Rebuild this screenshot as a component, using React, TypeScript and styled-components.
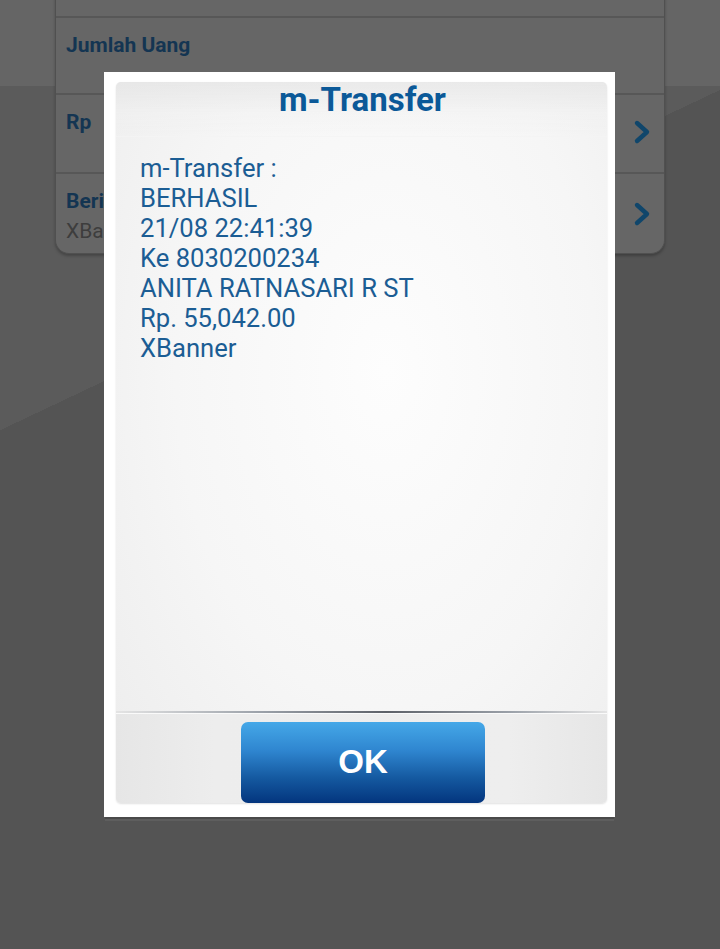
import React from "react";
import styled, { createGlobalStyle } from "styled-components";

const Global = createGlobalStyle`
  html, body { margin: 0; padding: 0; background: #545454; }
  body { font-family: Roboto, "Noto Sans", Arial, sans-serif; }
  * { box-sizing: border-box; }
`;

const Screen = styled.div`
  position: relative;
  width: 720px;
  height: 949px;
  overflow: hidden;
  background:
    linear-gradient(to bottom, #656565 0 86px, transparent 86px),
    linear-gradient(154.7deg, #5b5b5b 389px, #545454 389px);
  padding: 0 55px;
`;

const Card = styled.div`
  margin-top: -60px;
  background: #666666;
  border: 1px solid #505050;
  border-top: none;
  border-radius: 0 0 14px 14px;
  box-shadow: 0 2px 3px rgba(0, 0, 0, 0.25);
  display: flex;
  flex-direction: column;
`;

const Row = styled.div<{ $h: number; $last?: boolean }>`
  height: ${(p) => p.$h}px;
  border-bottom: ${(p) => (p.$last ? "none" : "2px solid #575757")};
  padding: 14px 12px 0 10px;
  display: flex;
  align-items: flex-start;
  justify-content: space-between;
`;

const RowText = styled.div`
  display: flex;
  flex-direction: column;
`;

const Label = styled.div`
  font-family: Roboto, sans-serif;
  font-weight: 700;
  font-size: 21px;
  line-height: 26px;
  color: #143552;
`;

const Value = styled.div<{ $top?: boolean }>`
  font-family: Roboto, sans-serif;
  font-size: 21px;
  line-height: 26px;
  color: #3d3d3d;
  margin-top: ${(p) => (p.$top ? "-31px" : "4px")};
  white-space: nowrap;
`;

const Chevron = styled.svg<{ $dy: number }>`
  width: 20px;
  height: 26px;
  margin-top: ${(p) => p.$dy}px;
  flex: none;
`;

const Overlay = styled.div`
  position: absolute;
  left: 104px;
  top: 72px;
  width: 511px;
  height: 745px;
  background: #ffffff;
  padding: 10px 8px 14px 12px;
  box-shadow: 0 3px 0 -1px #4a4a4a, 0 5px 0 -1px #5e5e5e;
`;

const Panel = styled.div`
  height: 100%;
  border-radius: 5px;
  display: flex;
  flex-direction: column;
  background: radial-gradient(ellipse at 55% 40%, #fdfdfd 0%, #f6f6f6 55%, #ececec 100%);
  box-shadow: 0 1px 2px rgba(0, 0, 0, 0.12);
`;

const Title = styled.div`
  height: 55px;
  flex: none;
  text-align: center;
  font-family: Roboto, sans-serif;
  font-weight: 700;
  font-size: 33px;
  line-height: 36px;
  color: #0b5998;
  padding-left: 2px;
  border-radius: 5px 5px 0 0;
  background: linear-gradient(to bottom, rgba(225, 225, 225, 0.6), rgba(240, 240, 240, 0.3) 60%, rgba(250, 250, 250, 0));
  border-bottom: 1px solid rgba(255, 255, 255, 0.5);
`;

const Body = styled.div`
  flex: 1;
  padding: 16px 0 0 24px;
  font-family: Roboto, sans-serif;
  font-size: 25.6px;
  line-height: 30px;
  color: #1b5d94;
`;

const Line = styled.div``;

const Divider = styled.div`
  flex: none;
  height: 3px;
  background: linear-gradient(to right, #e4e4e4 0%, #9aa0a8 30%, #5d6168 55%, #9aa0a8 80%, #e4e4e4 100%);
  border-bottom: 1px solid #fafafa;
`;

const Footer = styled.div`
  flex: none;
  height: 89px;
  border-radius: 0 0 5px 5px;
  background: linear-gradient(to right, #e6e6e6, #ededed 20%, #eeeeee 80%, #e6e6e6);
  display: flex;
  justify-content: center;
  padding-top: 8px;
`;

const OkButton = styled.button`
  width: 244px;
  height: 81px;
  margin-left: 3px;
  border: none;
  border-radius: 7px;
  background: linear-gradient(to bottom, #45a8e8 0%, #2f86d0 35%, #14589f 70%, #03357e 100%);
  color: #ffffff;
  font-family: "Liberation Sans", Arial, sans-serif;
  font-weight: 700;
  font-size: 33px;
  padding: 0 0 2px 0;
  cursor: pointer;
`;

const ChevronIcon = ({ dy }: { dy: number }) => (
  <Chevron $dy={dy} viewBox="0 0 20 26">
    <path d="M5 4 L15 13 L5 22" fill="none" stroke="#10466b" strokeWidth="4.4" strokeLinecap="round" strokeLinejoin="round" />
  </Chevron>
);

const lines = [
  "m-Transfer :",
  "BERHASIL",
  "21/08 22:41:39",
  "Ke 8030200234",
  "ANITA RATNASARI R ST",
  "Rp. 55,042.00",
  "XBanner",
];

export default function App() {
  return (
    <>
      <Global />
      <Screen>
        <Card>
          <Row $h={78}>
            <RowText>
              <Value $top>8030200234 - ANITA RATNASARI R ST</Value>
            </RowText>
          </Row>
          <Row $h={77}>
            <RowText>
              <Label>Jumlah Uang</Label>
            </RowText>
          </Row>
          <Row $h={79}>
            <RowText>
              <Label>Rp</Label>
            </RowText>
            <ChevronIcon dy={10} />
          </Row>
          <Row $h={79} $last>
            <RowText>
              <Label>Berita</Label>
              <Value>XBanner</Value>
            </RowText>
            <ChevronIcon dy={13} />
          </Row>
        </Card>
        <Overlay>
          <Panel>
            <Title>m-Transfer</Title>
            <Body>
              {lines.map((l) => (
                <Line key={l}>{l}</Line>
              ))}
            </Body>
            <Divider />
            <Footer>
              <OkButton>OK</OkButton>
            </Footer>
          </Panel>
        </Overlay>
      </Screen>
    </>
  );
}
